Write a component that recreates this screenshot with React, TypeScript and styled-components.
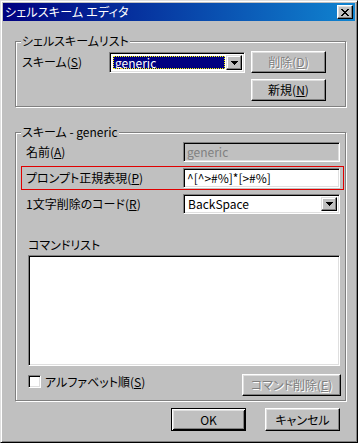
import React from 'react'
import styled, { createGlobalStyle } from 'styled-components'

const GlobalStyle = createGlobalStyle`
  html, body {
    margin: 0;
    padding: 0;
    background: #c0c0c0;
  }
  body {
    font-family: 'Noto Sans CJK JP', 'Noto Sans', sans-serif;
    font-size: 12px;
  }
`

const Window = styled.div`
  box-sizing: border-box;
  width: 358px;
  height: 443px;
  display: flex;
  flex-direction: column;
  padding: 2px;
  background: #c0c0c0;
  border: 1px solid;
  border-color: #dfdfdf #000 #000 #dfdfdf;
  box-shadow: inset 1px 1px #fff, inset -1px -1px #808080;
  color: #000;
  font-family: 'Noto Sans CJK JP', 'Noto Sans', sans-serif;
  font-size: 12px;
  line-height: 14px;
  font-feature-settings: 'palt';
`

const TitleBar = styled.div`
  height: 18px;
  display: flex;
  align-items: center;
  justify-content: space-between;
  padding: 0 2px;
  background: linear-gradient(90deg, #000080, #1084d0);
  color: #fff;
`

const TitleText = styled.span`
  letter-spacing: 0.2px;
`

const CloseButton = styled.div`
  box-sizing: border-box;
  width: 16px;
  height: 14px;
  display: flex;
  align-items: center;
  justify-content: center;
  background: #c0c0c0;
  border: 1px solid;
  border-color: #fff #000 #000 #fff;
  box-shadow: inset -1px -1px #808080, inset 1px 1px #dfdfdf;
`

const Body = styled.div`
  flex: 1;
  display: flex;
  flex-direction: column;
  padding: 0 9px 0 12px;
`

const Group = styled.section<{ $top: number }>`
  display: flex;
  flex-direction: column;
  margin-top: ${(p) => p.$top}px;
  border: 1px solid #808080;
  box-shadow: inset 1px 1px #fff, 1px 1px #fff;
`

// caption sits over the etched frame line
const Caption = styled.div`
  align-self: flex-start;
  margin: -8px 0 0 5px;
  padding: 0 1px;
  background: #c0c0c0;
  line-height: 14px;
`

const SchemeGrid = styled.div`
  display: grid;
  grid-template-columns: 81px 136px 75px;
  grid-template-rows: 22px 22px;
  column-gap: 6px;
  row-gap: 6px;
  margin-top: 3px;
  padding: 0 0 5px 6px;
`

const FieldLabel = styled.span`
  align-self: center;
  white-space: nowrap;
`

const Sunken = styled.div`
  box-sizing: border-box;
  border: 1px solid;
  border-color: #808080 #fff #fff #808080;
  box-shadow: inset 1px 1px #000, inset -1px -1px #dfdfdf;
`

const Combo = styled(Sunken)<{ $height: number }>`
  height: ${(p) => p.$height}px;
  display: flex;
  align-items: stretch;
  padding: 2px;
  background: #fff;
  align-self: end;
`

const ComboValue = styled.div<{ $selected?: boolean }>`
  flex: 1;
  display: flex;
  align-items: center;
  padding: 0 2px;
  margin: ${(p) => (p.$selected ? '1px' : '0')};
  background: ${(p) => (p.$selected ? '#000080' : '#fff')};
  color: ${(p) => (p.$selected ? '#fff' : '#000')};
  outline: ${(p) => (p.$selected ? '1px dotted #ffff00' : 'none')};
  outline-offset: -1px;
`

const ArrowButton = styled.div`
  box-sizing: border-box;
  width: 16px;
  display: flex;
  align-items: center;
  justify-content: center;
  background: #c0c0c0;
  border: 1px solid;
  border-color: #dfdfdf #000 #000 #dfdfdf;
  box-shadow: inset -1px -1px #808080, inset 1px 1px #fff;
`

const Button = styled.button<{ $width: number; $height?: number; $default?: boolean; $column?: number }>`
  box-sizing: border-box;
  width: ${(p) => p.$width}px;
  height: ${(p) => p.$height ?? 22}px;
  grid-column: ${(p) => p.$column ?? 'auto'};
  padding: 0;
  background: #c0c0c0;
  font: inherit;
  font-feature-settings: 'palt';
  color: #000;
  border: 1px solid;
  border-color: ${(p) => (p.$default ? '#000' : '#fff #000 #000 #fff')};
  box-shadow: ${(p) =>
    p.$default
      ? 'inset 1px 1px #fff, inset -1px -1px #000, inset 2px 2px #dfdfdf, inset -2px -2px #808080'
      : 'inset -1px -1px #808080, inset 1px 1px #dfdfdf'};

  &:disabled {
    color: #808080;
    text-shadow: 1px 1px #fff;
  }
`

const Row = styled.div<{ $highlighted?: boolean; $top?: number }>`
  display: grid;
  grid-template-columns: 1fr 157px;
  align-items: center;
  margin: ${(p) => p.$top ?? 2}px 1px 0 5px;
  padding: 1px 3px 1px 4px;
  border: 1px solid ${(p) => (p.$highlighted ? '#e00000' : 'transparent')};
`

const EditBox = styled(Sunken)<{ $disabled?: boolean }>`
  height: 20px;
  display: flex;
  align-items: center;
  padding: 0 3px;
  background: ${(p) => (p.$disabled ? '#c0c0c0' : '#fff')};
  color: ${(p) => (p.$disabled ? '#808080' : '#000')};
  white-space: nowrap;
`

const ListLabel = styled.div`
  margin: 22px 0 0 12px;
`

const ListBox = styled(Sunken)`
  width: 312px;
  height: 111px;
  margin: 3px 0 0 12px;
  background: #fff;
`

const BottomRow = styled.div`
  display: flex;
  justify-content: space-between;
  align-items: flex-start;
  margin: 8px 4px 4px 12px;
`

const CheckWrap = styled.label`
  height: 15px;
  display: flex;
  align-items: center;
  gap: 4px;
`

const CheckBox = styled(Sunken)`
  width: 13px;
  height: 13px;
  background: #fff;
`

const Footer = styled.div`
  display: flex;
  justify-content: flex-end;
  gap: 19px;
  margin-top: 7px;
  padding-right: 6px;
`

const CloseGlyph = () => (
  <svg width="8" height="7" viewBox="0 0 8 7" shapeRendering="crispEdges">
    <path
      d="M0 0h2v1H0zM6 0h2v1H6zM1 1h2v1H1zM5 1h2v1H5zM2 2h4v1H2zM3 3h2v1H3zM2 4h4v1H2zM1 5h2v1H1zM5 5h2v1H5zM0 6h2v1H0zM6 6h2v1H6z"
      fill="#000"
    />
  </svg>
)

const DownArrow = () => (
  <svg width="7" height="4" viewBox="0 0 7 4" shapeRendering="crispEdges">
    <path d="M0 0h7v1H0zM1 1h5v1H1zM2 2h3v1H2zM3 3h1v1H3z" fill="#000" />
  </svg>
)

const App: React.FC = () => {
  return (
    <>
      <GlobalStyle />
      <Window>
        <TitleBar>
          <TitleText>シェルスキーム エディタ</TitleText>
          <CloseButton>
            <CloseGlyph />
          </CloseButton>
        </TitleBar>
        <Body>
          <Group $top={20}>
            <Caption>シェルスキームリスト</Caption>
            <SchemeGrid>
              <FieldLabel>
                スキーム(<u>S</u>)
              </FieldLabel>
              <Combo $height={21}>
                <ComboValue $selected>generic</ComboValue>
                <ArrowButton>
                  <DownArrow />
                </ArrowButton>
              </Combo>
              <Button $width={75} disabled>
                削除(<u>D</u>)
              </Button>
              <Button $width={75} $column={3}>
                新規(<u>N</u>)
              </Button>
            </SchemeGrid>
          </Group>

          <Group $top={25}>
            <Caption>スキーム - generic</Caption>
            <Row $top={1}>
              <FieldLabel>
                名前(<u>A</u>)
              </FieldLabel>
              <EditBox $disabled>generic</EditBox>
            </Row>
            <Row $highlighted>
              <FieldLabel>
                プロンプト正規表現(<u>P</u>)
              </FieldLabel>
              <EditBox>^[^&gt;#%]*[&gt;#%]</EditBox>
            </Row>
            <Row>
              <FieldLabel>
                1文字削除のコード(<u>R</u>)
              </FieldLabel>
              <Combo $height={20}>
                <ComboValue>BackSpace</ComboValue>
                <ArrowButton>
                  <DownArrow />
                </ArrowButton>
              </Combo>
            </Row>
            <ListLabel>コマンドリスト</ListLabel>
            <ListBox />
            <BottomRow>
              <CheckWrap>
                <CheckBox />
                <span>
                  アルファベット順(<u>S</u>)
                </span>
              </CheckWrap>
              <Button $width={99} disabled>
                コマンド削除(<u>E</u>)
              </Button>
            </BottomRow>
          </Group>

          <Footer>
            <Button $width={75} $height={23} $default>
              OK
            </Button>
            <Button $width={75} $height={23}>
              キャンセル
            </Button>
          </Footer>
        </Body>
      </Window>
    </>
  )
}

export default App
